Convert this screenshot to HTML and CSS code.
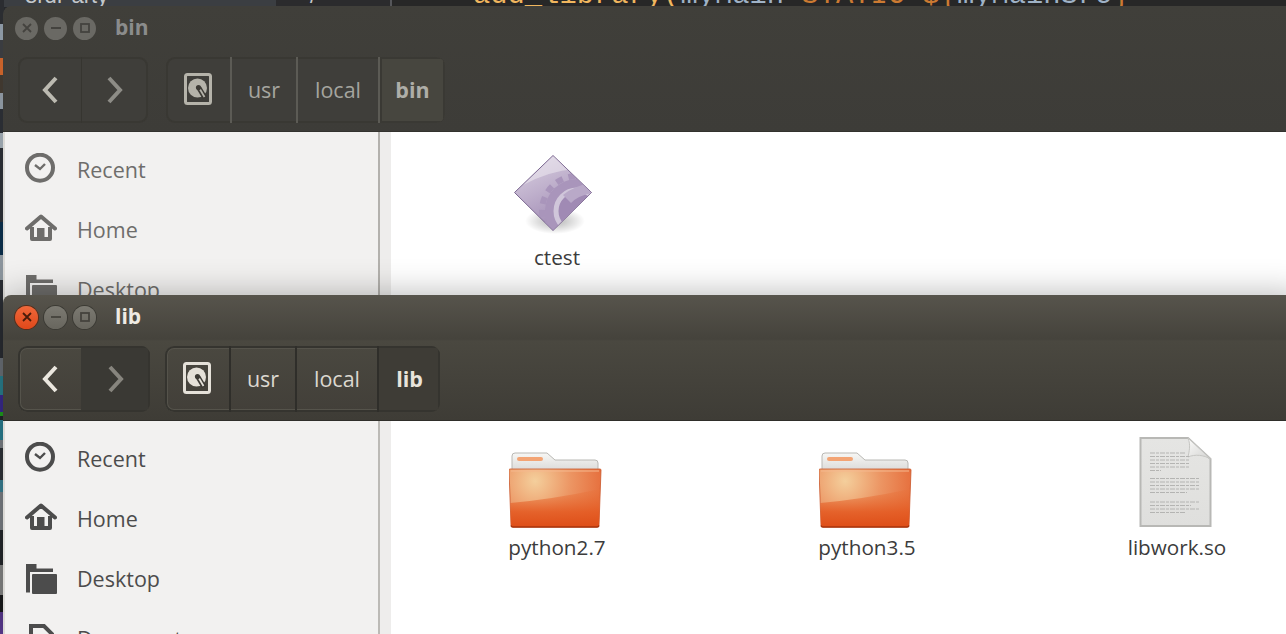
FILE: index.html
```html
<!DOCTYPE html>
<html lang="en">
<head>
<meta charset="utf-8">
<title>Files</title>
<link rel="stylesheet" href="styles.css">
</head>
<body>
<svg class="defs" width="0" height="0" aria-hidden="true">
  <defs>
    <symbol id="i-clock" viewBox="0 0 32 32">
      <circle cx="15" cy="14.7" r="13" fill="none" stroke="currentColor" stroke-width="4"/>
      <path d="M10 12l5 4 5-5" fill="none" stroke="currentColor" stroke-width="2.4"/>
    </symbol>
    <symbol id="i-home" viewBox="0 0 32 32">
      <path d="M2 15.500L16 3.500 30 15.500" fill="none" stroke="currentColor" stroke-width="4" stroke-linecap="round" stroke-linejoin="round"/>
      <path d="M7 14V26H25V14" fill="none" stroke="currentColor" stroke-width="4" stroke-linejoin="round"/>
      <rect x="12" y="15" width="7.500" height="12" fill="currentColor"/>
    </symbol>
    <symbol id="i-folder" viewBox="0 0 32 32">
      <path d="M1 2H11.500V6.500H28V10H5V30.500H1Z" fill="currentColor"/>
      <rect x="7" y="12" width="25" height="20" rx="1" fill="currentColor"/>
    </symbol>
    <symbol id="i-doc" viewBox="0 0 32 32">
      <path d="M6 4H19L27 12V30H6Z" fill="none" stroke="currentColor" stroke-width="4"/>
    </symbol>
    <symbol id="i-disk" viewBox="0 0 28 32">
      <rect x="1.500" y="1.500" width="25" height="29" rx="2" fill="none" stroke="currentColor" stroke-width="3"/>
      <circle cx="13.500" cy="15" r="9.500" fill="currentColor"/>
      <path d="M15 15L21 25" stroke="#3c3a35" stroke-width="5"/>
      <path d="M15.500 15.500L20.500 24" stroke="currentColor" stroke-width="1.800"/>
      <circle cx="14.500" cy="14.500" r="2.600" fill="#3c3a35"/>
    </symbol>
    <symbol id="i-back" viewBox="0 0 16 28">
      <path d="M14 2L3 14 14 26" fill="none" stroke="currentColor" stroke-width="4"/>
    </symbol>
    <symbol id="i-forward" viewBox="0 0 16 28">
      <path d="M2 2L13 14 2 26" fill="none" stroke="currentColor" stroke-width="4"/>
    </symbol>
    <linearGradient id="g-paper" x1="0" y1="0" x2="0" y2="1">
      <stop offset="0" stop-color="#f7f7f5"/><stop offset="1" stop-color="#dcdcda"/>
    </linearGradient>
    <radialGradient id="g-folder" gradientUnits="userSpaceOnUse" cx="26" cy="44" r="80">
      <stop offset="0" stop-color="#f4cf9c"/><stop offset=".45" stop-color="#ec9563"/><stop offset="1" stop-color="#e4602e"/>
    </radialGradient>
    <linearGradient id="g-folder-low" x1="0" y1="0" x2="0" y2="1">
      <stop offset="0" stop-color="#e8743c" stop-opacity=".3"/><stop offset=".6" stop-color="#e45c24" stop-opacity=".9"/><stop offset="1" stop-color="#de4e18"/>
    </linearGradient>
    <symbol id="i-orange-folder" viewBox="0 0 96 96">
      <path d="M3 33V19a3 3 0 0 1 3-3H38L46 23H86a3 3 0 0 1 3 3V33Z" fill="url(#g-paper)" stroke="#b9b8b4"/>
      <rect x="8" y="20" width="26" height="4" rx="2" fill="#f3a474"/>
      <path d="M0 33a1 1 0 0 1 1-1H91a1 1 0 0 1 1 1L90 88a2 2 0 0 1-2 2H4a2 2 0 0 1-2-2Z" fill="url(#g-folder)" stroke="#c9562a" stroke-width=".8"/>
      <path d="M1.400 66Q45 62 91.100 52L90 88a2 2 0 0 1-2 2H4a2 2 0 0 1-2-2Z" fill="url(#g-folder-low)"/>
      <path d="M2 88.500a2 2 0 0 0 2 1.500H88a2 2 0 0 0 2-1.500" fill="none" stroke="#a8340c" stroke-width="1.500"/>
      <path d="M2 34H90" stroke="#f6b88e" stroke-width="1"/>
    </symbol>
  </defs>
</svg>

<div class="desktop">
  <div class="strip-left"></div>
  <div class="strip-top">
    <div class="pane pane-tree"><span class="tree-text">3rdParty</span></div>
    <div class="pane pane-gutter"><span class="tree-text">/</span></div>
    <div class="pane pane-code"><span class="code-text"><span class="c-fn">add_library(</span><span class="c-var">myMain</span> <span class="c-kw">STATIC</span> <span class="c-kw">${</span><span class="c-var">myMainSrc</span><span class="c-kw">}</span></span></div>
  </div>

  <section class="win win-back">
    <header class="head">
      <div class="titlebar">
        <span class="wbtn wbtn-close"><svg class="wglyph" viewBox="0 0 12 12"><path d="M2 2L10 10M10 2L2 10"/></svg></span>
        <span class="wbtn"><svg class="wglyph" viewBox="0 0 12 12"><path d="M1 6H11"/></svg></span>
        <span class="wbtn"><svg class="wglyph" viewBox="0 0 12 12"><rect x="2" y="2" width="8" height="8"/></svg></span>
        <span class="title">bin</span>
      </div>
      <div class="toolbar">
        <div class="nav">
          <span class="nav-btn nav-on"><svg class="chev"><use href="#i-back"/></svg></span>
          <span class="nav-btn nav-off"><svg class="chev"><use href="#i-forward"/></svg></span>
        </div>
        <div class="path">
          <span class="seg seg-icon"><svg class="disk"><use href="#i-disk"/></svg></span>
          <span class="seg seg-usr">usr</span>
          <span class="seg seg-local">local</span>
          <span class="seg seg-current seg-bin">bin</span>
        </div>
      </div>
    </header>
    <div class="body">
      <nav class="side">
        <div class="row"><svg class="side-icon"><use href="#i-clock"/></svg><span>Recent</span></div>
        <div class="row"><svg class="side-icon"><use href="#i-home"/></svg><span>Home</span></div>
        <div class="row"><svg class="side-icon"><use href="#i-folder"/></svg><span>Desktop</span></div>
      </nav>
      <div class="gap"></div>
      <main class="files">
        <div class="file">
          <svg class="file-icon" viewBox="0 0 96 96">
            <defs>
              <linearGradient id="g-dia" x1="0" y1="0" x2=".5" y2="1">
                <stop offset="0" stop-color="#ddd5e4"/><stop offset=".5" stop-color="#bfb0cc"/><stop offset="1" stop-color="#9e88b2"/>
              </linearGradient>
              <clipPath id="c-dia"><path d="M44 9L82 45.500 44 83 6 45.500Z"/></clipPath>
              <radialGradient id="g-shadow"><stop offset="0" stop-color="#000" stop-opacity=".3"/><stop offset="1" stop-color="#000" stop-opacity="0"/></radialGradient>
            </defs>
            <ellipse cx="46" cy="74" rx="30" ry="13" fill="url(#g-shadow)"/>
            <path d="M44 8.500L82.500 45.500 44 83.500 5.500 45.500Z" fill="url(#g-dia)" stroke="#7a6690" stroke-width="1"/>
            <g clip-path="url(#c-dia)">
              <path d="M14 38Q40 24 66 22L44 9Z" fill="#f1edf4" opacity=".5"/>
              <circle cx="68" cy="64" r="32" fill="#a995bb"/>
              <circle cx="68" cy="64" r="35" fill="none" stroke="#a995bb" stroke-width="6" stroke-dasharray="7 6"/>
              <circle cx="68" cy="64" r="21" fill="#a08ab4"/>
              <circle cx="68" cy="64" r="21" fill="none" stroke="#d0c6da" stroke-width="5"/>
              <path d="M54 48Q66 38 84 36L84 46Q70 48 62 56Z" fill="#b9a9c8"/>
              <path d="M44 83L68 60 84 50V83Z" fill="#b5a4c5" opacity=".7"/>
            </g>
          </svg>
          <span class="file-name">ctest</span>
        </div>
      </main>
    </div>
  </section>

  <section class="win win-front">
    <header class="head">
      <div class="titlebar">
        <span class="wbtn wbtn-close"><svg class="wglyph" viewBox="0 0 12 12"><path d="M2 2L10 10M10 2L2 10"/></svg></span>
        <span class="wbtn"><svg class="wglyph" viewBox="0 0 12 12"><path d="M1 6H11"/></svg></span>
        <span class="wbtn"><svg class="wglyph" viewBox="0 0 12 12"><rect x="2" y="2" width="8" height="8"/></svg></span>
        <span class="title">lib</span>
      </div>
      <div class="toolbar">
        <div class="nav">
          <span class="nav-btn nav-on"><svg class="chev"><use href="#i-back"/></svg></span>
          <span class="nav-btn nav-off"><svg class="chev"><use href="#i-forward"/></svg></span>
        </div>
        <div class="path">
          <span class="seg seg-icon"><svg class="disk"><use href="#i-disk"/></svg></span>
          <span class="seg seg-usr">usr</span>
          <span class="seg seg-local">local</span>
          <span class="seg seg-current seg-lib">lib</span>
        </div>
      </div>
    </header>
    <div class="body">
      <nav class="side">
        <div class="row"><svg class="side-icon"><use href="#i-clock"/></svg><span>Recent</span></div>
        <div class="row"><svg class="side-icon"><use href="#i-home"/></svg><span>Home</span></div>
        <div class="row"><svg class="side-icon"><use href="#i-folder"/></svg><span>Desktop</span></div>
        <div class="row"><svg class="side-icon"><use href="#i-doc"/></svg><span>Documents</span></div>
      </nav>
      <div class="gap"></div>
      <main class="files">
        <div class="file">
          <svg class="file-icon" viewBox="0 0 96 96"><use href="#i-orange-folder"/></svg>
          <span class="file-name">python2.7</span>
        </div>
        <div class="file">
          <svg class="file-icon" viewBox="0 0 96 96"><use href="#i-orange-folder"/></svg>
          <span class="file-name">python3.5</span>
        </div>
        <div class="file">
          <svg class="file-icon" viewBox="0 0 96 96">
            <defs>
              <linearGradient id="g-sheet" x1="0" y1="0" x2="0" y2="1"><stop offset="0" stop-color="#e5e5e3"/><stop offset="1" stop-color="#dfdfdd"/></linearGradient>
              <linearGradient id="g-fold" x1="0" y1="0" x2="1" y2="1"><stop offset="0" stop-color="#fbfbfa"/><stop offset="1" stop-color="#d2d2d0"/></linearGradient>
            </defs>
            <path d="M11.500 1H59L81.500 22V89H11.500Z" fill="url(#g-sheet)" stroke="#b8b8b5" stroke-width="2"/>
            <path d="M59 1C62 8 60 15 59 20C66 17 75 18 81.500 22Z" fill="url(#g-fold)" stroke="#c6c6c3"/>
            <g class="doc-lines">
              <path d="M21 16H56M21 19.500H60M21 23H60M21 26.500H60M21 30H60M21 33.500H32"/>
              <path d="M21 41.500H70M21 45H70M21 48.500H70M21 52H70M21 55.500H58"/>
              <path d="M21 65H70M21 68.500H62M21 72H70M21 75.500H57"/>
            </g>
          </svg>
          <span class="file-name">libwork.so</span>
        </div>
      </main>
    </div>
  </section>
</div>
</body>
</html>
```

FILE: styles.css
```css
* { box-sizing: border-box; }
html, body { margin: 0; height: 100%; overflow: hidden; background: #26282b; }
body { font-family: "Open Sans", "Noto Sans", sans-serif; }
.defs { position: absolute; }

.desktop { position: relative; width: 1286px; height: 634px; overflow: hidden; }

.strip-left {
  position: absolute; left: 0; top: 0; width: 4px; height: 634px;
  background: linear-gradient(to bottom,
    #2b2d31 0 24px, #8c98a4 24px 40px, #3a3c40 40px 58px, #c8622a 58px 75px, #40382f 75px 93px,
    #8a949e 93px 109px, #2a2d33 109px 133px, #98a2aa 133px 148px, #2a2d33 148px 222px,
    #0b2c47 222px 255px, #8b949c 255px 280px, #2a2d33 280px 358px, #6c7278 358px 376px,
    #2a8090 376px 395px, #3a2b90 395px 412px, #1ea01e 412px 416px, #22252a 416px 420px,
    #2a7f93 420px 440px, #7d8287 440px 448px, #30353a 448px 480px, #3a8296 480px 492px,
    #7d8287 492px 530px, #25282c 530px 565px, #888 565px 595px, #1a1a1c 595px 612px, #5a3a90 612px 634px);
}

.strip-top { position: absolute; left: 4px; top: 0; right: 0; height: 7px; display: flex; overflow: hidden; }
.pane { height: 30px; flex: none; line-height: 30px; white-space: nowrap; margin-top: -19px; }
.pane-tree { width: 272px; background: #3b3e42; padding-left: 21px; }
.pane-gutter { width: 116px; background: #2b2b2d; border-right: 2px solid #55565a; padding-left: 34px; }
.pane-code { flex: 1; background: #272727; padding-left: 81px; }
.tree-text { font: 22px/30px "Liberation Sans", sans-serif; color: #c3c7cb; }
.code-text { font: 28.800px/30px "Liberation Mono", monospace; }
.c-fn { color: #f0b65e; }
.c-var { color: #9fb2c6; }
.c-kw { color: #cc7a32; }

.win {
  position: absolute; left: 3px; width: 1300px;
  border-radius: 8px 0 0 0; overflow: hidden;
}
.win-back { top: 6px; height: 300px; }
.win-front {
  top: 295px; height: 340px; overflow: visible; z-index: 1;
  box-shadow: 0 0 34px rgba(0, 0, 0, .3);
}

.head { border-radius: 8px 0 0 0; }
.win-back .head { background: linear-gradient(#403f3a, #3d3c38); }
.win-front .head { background: linear-gradient(#57544c 0, #45433c 44px, #4a4840 46px, #3e3c36 100%); }

.titlebar { height: 44px; display: flex; align-items: center; padding-left: 12px; gap: 6px; }
.wbtn {
  width: 23px; height: 23px; border-radius: 50%; flex: none;
  display: flex; align-items: center; justify-content: center;
}
.wglyph { width: 12px; height: 12px; fill: none; stroke-width: 1.800; }
.win-back .wbtn { background: #6a6964; }
.win-back .wglyph { stroke: #44433f; }
.win-front .wbtn { background: linear-gradient(#7c7a72, #68665e); box-shadow: 0 0 0 1px #3b3a34; }
.win-front .wglyph { stroke: #45433d; }
.win-front .wbtn-close { background: linear-gradient(#f0683a, #e0481a); box-shadow: 0 0 0 1px #5a2c18; }
.win-front .wbtn-close .wglyph { stroke: #4a1c0a; }

.title { font-weight: 700; font-size: 21px; margin-left: 13px; line-height: 1; padding-bottom: 2px; }
.win-back .title { color: #8b8c8c; }
.win-front .title { color: #efebe3; }

.toolbar { display: flex; padding: 7px 0 8px 15px; }
.win-front .head { border-bottom: 1px solid #2f2e2a; }
.win-back .head { border-bottom: 1px solid #33322e; }

.nav, .path { height: 66px; display: flex; border-radius: 9px; overflow: hidden; flex: none; }
.win-back .nav, .win-back .path { box-shadow: inset 0 0 0 2px #393833; background: #3f3e3a; }
.win-front .nav, .win-front .path {
  box-shadow: inset 0 0 0 2px #35342f, inset 0 0 0 3px #55534b;
  background: linear-gradient(#4a4840, #423f39);
}
.win-back .path { margin-left: 18px; }
.win-front .path { margin-left: 15px; }

.nav-btn { height: 100%; display: flex; align-items: center; justify-content: center; }
.win-back .nav-on { width: 64px; border-right: 1px solid #363530; color: #bcbab1; }
.win-back .nav-off { width: 66px; color: #8d8c86; }
.win-front .nav-on { width: 63px; color: #ebe7df; }
.win-front .nav-off { width: 69px; color: #87857e; background: #3a3934; box-shadow: inset 0 -2px 0 #35342f, inset -2px 0 0 #35342f, inset 0 2px 0 #35342f; }
.chev { width: 16px; height: 28px; }

.seg { height: 100%; display: flex; align-items: center; justify-content: center; font-size: 21.500px; flex: none; padding-bottom: 2px; }
.win-back .seg { color: #a5a59f; border-right: 2px solid #5c5b55; }
.win-front .seg { color: #dcd8d0; border-right: 2px solid #2f2e2a; }
.seg-icon { width: 66px; }
.seg-usr { width: 66px; }
.seg-local { width: 82px; }
.seg-current { font-weight: 700; }
.win-back .seg-current { color: #aeaea8; background: #47463f; border-right: 0; box-shadow: inset 0 0 0 2px #3a3934; }
.win-front .seg-current { color: #e8e4dc; background: #3e3c36; border-right: 0; box-shadow: inset 0 -2px 0 #35342f, inset -2px 0 0 #35342f, inset 0 2px 0 #35342f; }
.seg-bin { width: 65px; }
.seg-lib { width: 61px; }
.disk { width: 28px; height: 32px; }
.win-back .disk { color: #b5b3aa; }
.win-front .disk { color: #e5e1d9; }

.body { display: flex; background: #fff; height: 500px; }
.side { width: 377px; flex: none; padding-top: 7px; background: #f2f1f0; border-left: 2px solid #dcdad6; border-right: 2px solid #b3b1ad; }
.win-front .side { border-right-color: #bcbab6; }
.gap { width: 11px; flex: none; background: #eeedec; }
.row { height: 60px; display: flex; align-items: center; gap: 20px; padding-left: 20px; font-size: 21.500px; }
.win-back .row { color: #6e6d6b; }
.win-front .row { color: #4c4c4c; }
.side-icon { width: 32px; height: 32px; flex: none; }

.files { flex: 1; display: grid; grid-template-columns: repeat(3, 310px); grid-auto-rows: min-content; padding: 15px 0 0 11px; }
.win-front .files { padding-top: 16px; }
.file { display: flex; flex-direction: column; align-items: center; }
.file-icon { width: 96px; height: 96px; flex: none; }
.file-name { font-size: 20.700px; line-height: 28px; color: #3c3c3c; }
.doc-lines path { fill: none; stroke: #b4b4b2; stroke-width: 1; stroke-dasharray: 5 1 3 1; }
```
